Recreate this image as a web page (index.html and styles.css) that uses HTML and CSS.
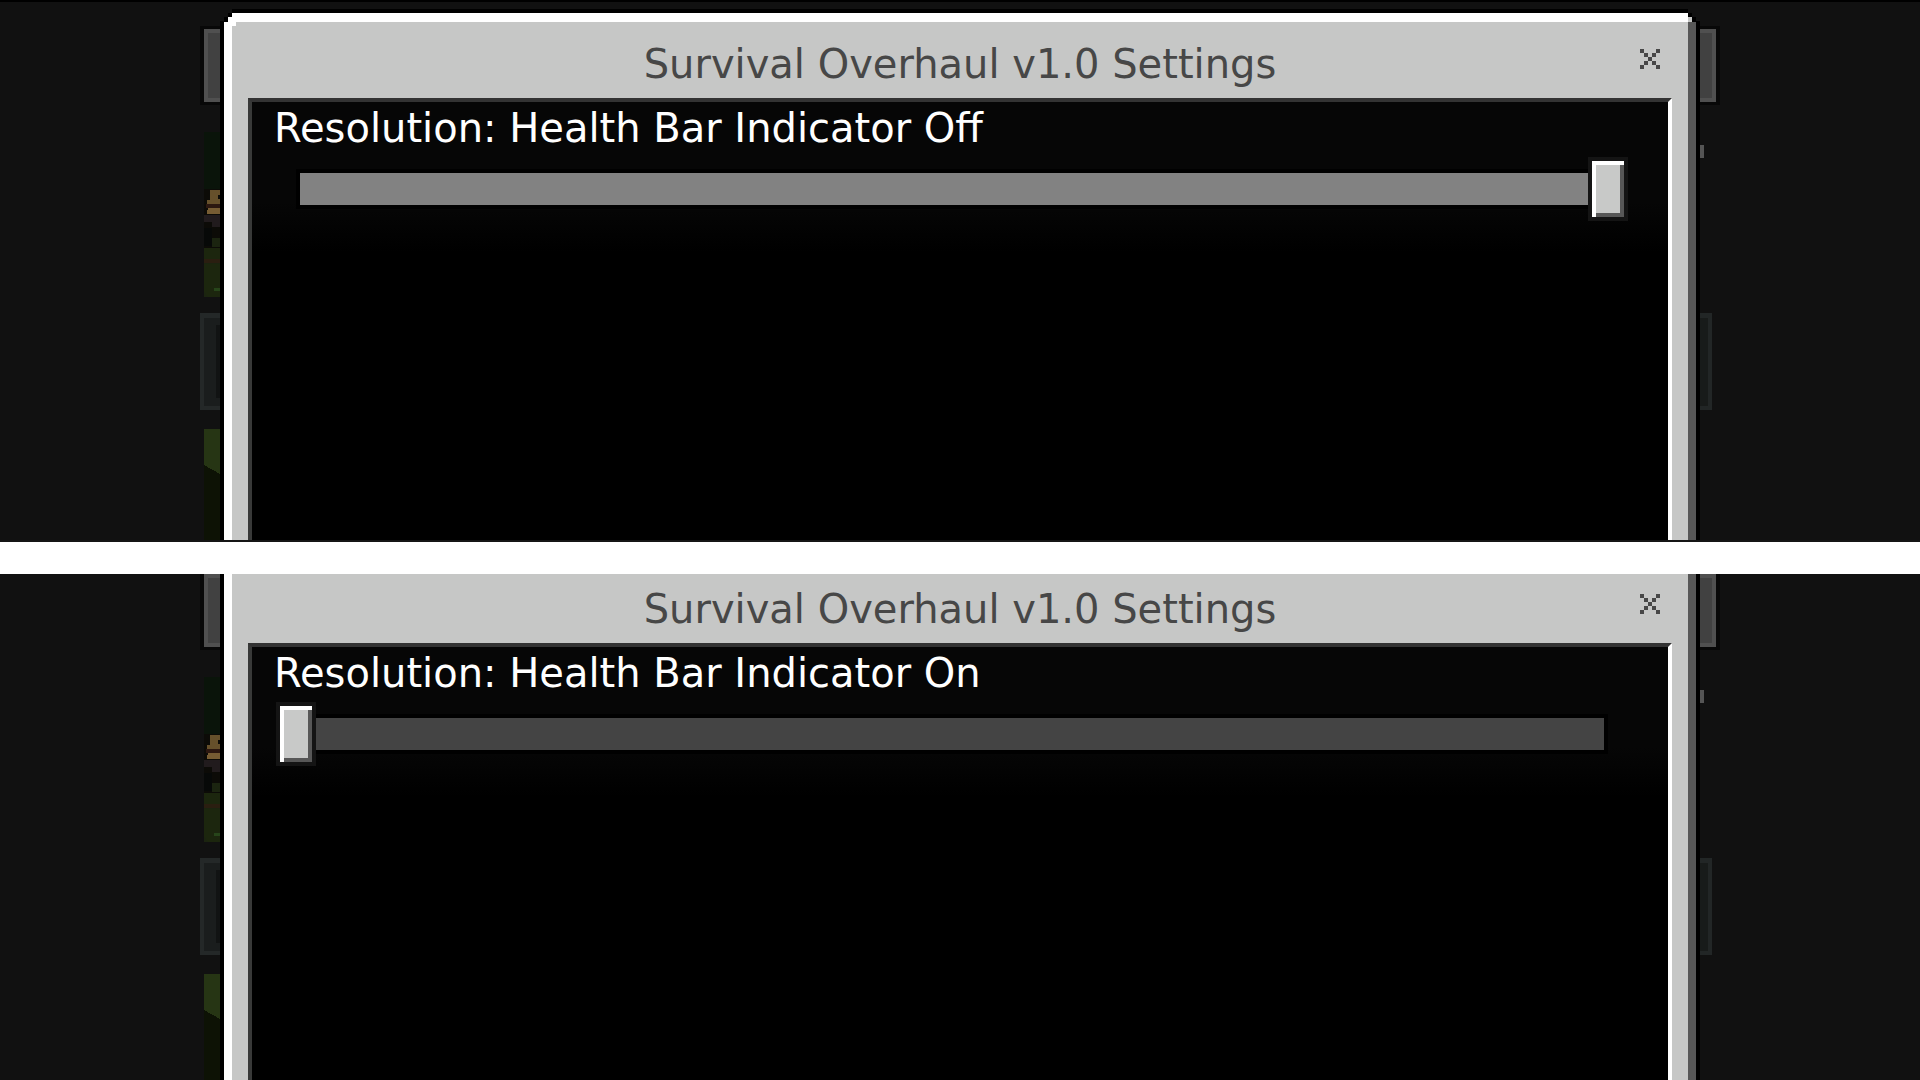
FILE: index.html
```html
<!DOCTYPE html>
<html lang="en">
<head>
<meta charset="utf-8">
<title>Survival Overhaul v1.0 Settings</title>
<link rel="stylesheet" href="styles.css">
</head>
<body>
<svg class="defs" aria-hidden="true">
  <defs>
    <g id="menu-left" shape-rendering="crispEdges">
      <path fill="#080808" d="M200 26h20v79h-20z"/>
      <path fill="#505050" d="M204 29h16v73h-16z"/>
      <path fill="#414141" d="M208 33h12v65h-12z"/>
      <path fill="#0a140a" d="M204 132h16v58h-16z"/>
      <path fill="#0c0b07" d="M204 189h16v108h-16z"/>
      <path fill="#66502b" d="M210 190h10v5h-2v4h2v5h-13v-4h3z"/>
      <path fill="#765c33" d="M208 208h12v6h-13v-4h1z"/>
      <path fill="#2b1710" d="M206 204h14v4h-14z"/>
      <path fill="#211b1d" d="M204 215h16v12h-8v-5h-8z"/>
      <path fill="#070908" d="M204 228h8v18h-8z"/>
      <path fill="#1b2410" d="M212 238h8v10h-16v49h16v-50h-8z"/>
      <path fill="#2a1e10" d="M204 259h16v4h-16z"/>
      <path fill="#1c260e" d="M204 248h16v11h-16zM204 264h16v33h-12l-4-6z"/>
      <path fill="#27451a" d="M214 288h6v3h-6z"/>
      <path fill="#242828" d="M200 313h20v97h-20z"/>
      <path fill="#1a1d1d" d="M204 318h16v88h-16z"/>
      <path fill="#111313" d="M216 325h4v73h-4z"/>
      <path fill="#0d1205" d="M204 429h16v141h-16z"/>
      <path fill="#263514" d="M204 429h16v45l-16-9z"/>
    </g>
    <g id="menu-right" shape-rendering="crispEdges">
      <path fill="#080808" d="M0 26h20v79H0z"/>
      <path fill="#505050" d="M0 29h16v73H0z"/>
      <path fill="#414141" d="M0 33h12v65H0z"/>
      <path fill="#555" d="M0 145h4v13H0z"/>
      <path fill="#222626" d="M0 313h12v97H0z"/>
      <path fill="#181b1a" d="M0 318h8v88H0z"/>
    </g>
    <path id="cross" fill="#474747" shape-rendering="crispEdges" d="M0 0h4v4H0zM16 0h4v4h-4zM4 4h4v4H4zM12 4h4v4h-4zM8 8h4v4H8zM4 12h4v4H4zM12 12h4v4h-4zM0 16h4v4H0zM16 16h4v4h-4z"/>
  </defs>
</svg>

<section class="scene scene-full">
  <svg class="backdrop" viewBox="0 0 220 570" aria-hidden="true"><use href="#menu-left"/></svg>
  <div class="panel">
    <div class="frame">
      <header class="bar">
        <h1 class="title">Survival Overhaul v1.0 Settings</h1>
        <button class="close" type="button" aria-label="Close"><svg width="20" height="20"><use href="#cross"/></svg></button>
      </header>
      <div class="well">
        <label class="label" for="indicator-off">Resolution: Health Bar Indicator Off</label>
        <input class="slider slider-lit" id="indicator-off" type="range" min="0" max="1" value="1">
      </div>
    </div>
  </div>
  <svg class="backdrop" viewBox="0 0 220 570" aria-hidden="true"><use href="#menu-right"/></svg>
</section>

<section class="scene scene-cut">
  <svg class="backdrop" viewBox="0 29 220 570" aria-hidden="true"><use href="#menu-left"/></svg>
  <div class="panel">
    <div class="frame">
      <header class="bar">
        <h1 class="title">Survival Overhaul v1.0 Settings</h1>
        <button class="close" type="button" aria-label="Close"><svg width="20" height="20"><use href="#cross"/></svg></button>
      </header>
      <div class="well">
        <label class="label" for="indicator-on">Resolution: Health Bar Indicator On</label>
        <input class="slider" id="indicator-on" type="range" min="0" max="1" value="0">
      </div>
    </div>
  </div>
  <svg class="backdrop" viewBox="0 29 220 570" aria-hidden="true"><use href="#menu-right"/></svg>
</section>
</body>
</html>
```
FILE: styles.css
```css
* {
  box-sizing: border-box;
}

body {
  margin: 0;
  min-height: 100vh;
  display: grid;
  grid-template-rows: 542fr 506fr;
  gap: 32px;
  background: #fff;
  font-family: "DejaVu Sans", sans-serif;
  font-size: 40px;
}

.defs {
  position: absolute;
  width: 0;
  height: 0;
}

.scene {
  display: grid;
  grid-template-columns: 220px minmax(0, 1fr) 220px;
  overflow: hidden;
  background: #111;
}

.scene-full {
  border-bottom: 2px solid #151515;
  background: linear-gradient(#000 2px, #111 2px);
}

.backdrop {
  width: 220px;
  height: 570px;
  margin-bottom: -80px;
}

/* Dialog: black outline around a bevelled grey frame */
.panel {
  display: flex;
  padding: 0 4px;
  background: #000;
}

.frame {
  flex: 1;
  display: flex;
  flex-direction: column;
  padding: 0 8px;
  background: linear-gradient(90deg, #fff 8px, #c6c7c6 8px, #c6c7c6 calc(100% - 8px), #575757 calc(100% - 8px));
}

.scene-full .panel {
  margin-top: 9px;
  padding-top: 4px;
  clip-path: polygon(0 12px, 4px 12px, 4px 8px, 8px 8px, 8px 4px, 12px 4px, 12px 0, calc(100% - 12px) 0, calc(100% - 12px) 4px, calc(100% - 8px) 4px, calc(100% - 8px) 8px, calc(100% - 4px) 8px, calc(100% - 4px) 12px, 100% 12px, 100% 100%, 0 100%);
}

.scene-full .frame {
  padding-top: 9px;
  background:
    linear-gradient(#fff, #fff) 8px 9px / 4px 4px no-repeat,
    linear-gradient(#c6c7c6, #c6c7c6) calc(100% - 4px) 4px / 4px 5px no-repeat,
    linear-gradient(#fff, #fff) 0 0 / 100% 9px no-repeat,
    linear-gradient(90deg, #fff 8px, #c6c7c6 8px, #c6c7c6 calc(100% - 8px), #575757 calc(100% - 8px));
  clip-path: polygon(0 9px, 4px 9px, 4px 4px, 8px 4px, 8px 0, calc(100% - 8px) 0, calc(100% - 8px) 4px, calc(100% - 4px) 4px, calc(100% - 4px) 9px, 100% 9px, 100% 100%, 0 100%);
}

.bar {
  display: grid;
  grid-template-columns: 48px 1fr 48px;
  align-items: start;
  padding: 14px 0 6px;
}

.scene-cut .bar {
  padding-top: 7px;
}

.title {
  grid-column: 2;
  margin: 0;
  font-size: 40px;
  font-weight: 400;
  line-height: 56px;
  text-align: center;
  color: #474747;
}

.close {
  width: 20px;
  height: 20px;
  margin-top: 13px;
  padding: 0;
  border: 0;
  background: none;
}

.close svg {
  display: block;
}

.well {
  flex: 1;
  display: flex;
  flex-direction: column;
  gap: 9px;
  margin: 0 16px;
  padding: 6px 40px 0 22px;
  border-top: 4px solid #333;
  border-left: 4px solid #383938;
  border-right: 4px solid #fff;
  background: linear-gradient(#060606 100px, #000 150px);
}

.label {
  line-height: 40px;
  color: #fff;
}

/* The groove stops half a thumb short of each end */
.slider {
  --groove: #444;
  appearance: none;
  align-self: stretch;
  height: 64px;
  margin: 0 0 0 2px;
  background:
    linear-gradient(var(--groove), var(--groove)) center / calc(100% - 48px) 32px no-repeat,
    linear-gradient(#000, #000) center / calc(100% - 40px) 40px no-repeat;
}

.slider-lit {
  --groove: #828282;
}

.slider::-webkit-slider-thumb {
  appearance: none;
  width: 40px;
  height: 64px;
  border: 4px solid #141414;
  border-radius: 0;
  background: #c8c9c8;
  box-shadow: inset 4px 4px #fff, inset -4px -4px #575757;
}
```
